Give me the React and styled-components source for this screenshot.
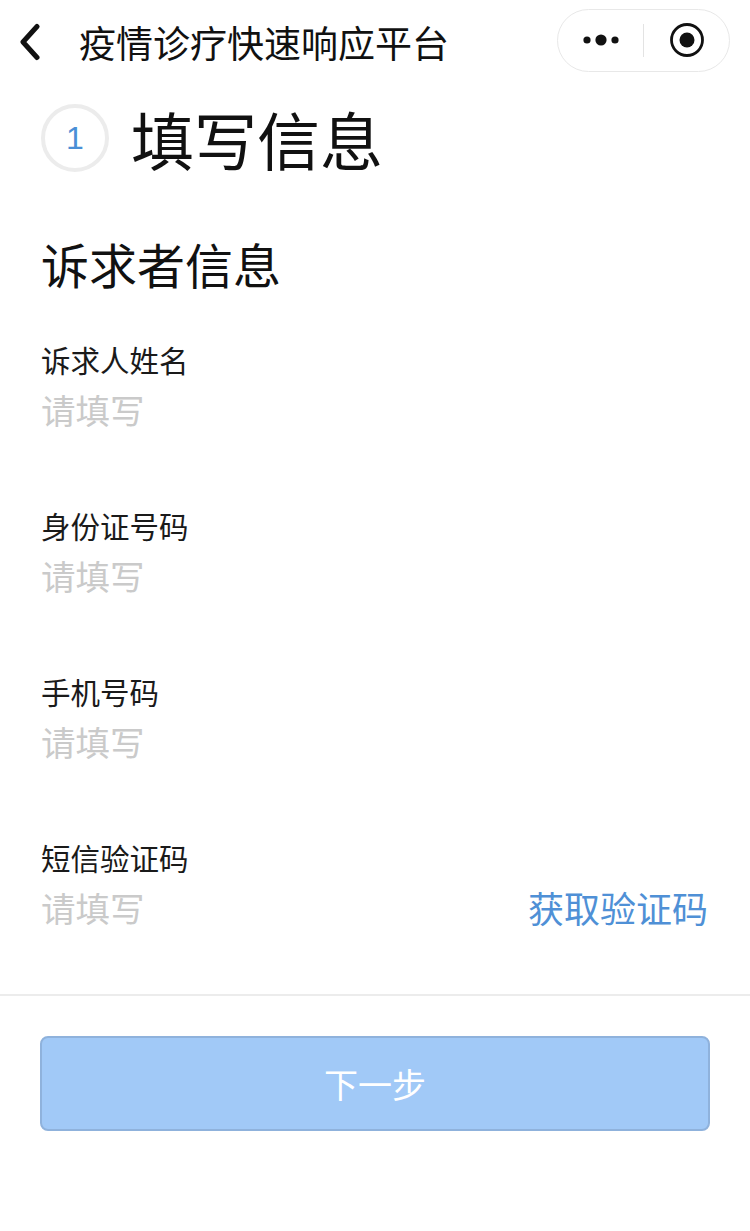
import React from "react";
import styled, { createGlobalStyle } from "styled-components";

const Global = createGlobalStyle`
  html, body { margin: 0; padding: 0; background: #fff; }
  body { font-family: "Noto Sans CJK SC", "Noto Sans", sans-serif; color: #1a1a1a; }
  * { box-sizing: border-box; }
`;

const Page = styled.div`
  width: 750px;
  min-height: 1231px;
  background: #fff;
  display: flex;
  flex-direction: column;
`;

const NavBar = styled.div`
  height: 82px;
  display: flex;
  align-items: center;
  padding: 0 20px 0 18px;
`;

const BackButton = styled.div`
  width: 26px;
  height: 40px;
  display: flex;
  align-items: center;
  margin-top: 2px;
`;

const NavTitle = styled.div`
  flex: 1;
  margin-left: 35px;
  font-size: 37px;
  line-height: 44px;
  color: #111;
  margin-top: 2px;
`;

const Capsule = styled.div`
  width: 173px;
  height: 63px;
  border: 1.5px solid #e8e8e8;
  border-radius: 32px;
  display: flex;
  align-items: center;
  margin-top: -2px;
`;

const CapsuleHalf = styled.div`
  flex: 1;
  height: 100%;
  display: flex;
  align-items: center;
  justify-content: center;
`;

const CapsuleDivider = styled.div`
  width: 1px;
  height: 33px;
  background: #e3e3e3;
`;

const StepRow = styled.div`
  margin-top: 22px;
  padding-left: 41px;
  display: flex;
  align-items: center;
  height: 68px;
`;

const StepCircle = styled.div`
  width: 68px;
  height: 68px;
  border-radius: 50%;
  border: 4px solid #ececec;
  display: flex;
  align-items: center;
  justify-content: center;
  font-family: "Liberation Sans", Arial, sans-serif;
  font-size: 32px;
  color: #4a8fd6;
`;

const StepTitle = styled.div`
  margin-left: 22px;
  font-size: 63px;
  line-height: 68px;
  color: #111;
`;

const SectionTitle = styled.div`
  margin-top: 61px;
  padding-left: 41px;
  font-size: 48px;
  line-height: 60px;
  color: #111;
`;

const FieldList = styled.div`
  margin-top: 46px;
  display: flex;
  flex-direction: column;
  gap: 71px;
  padding: 0 42px 0 41px;
`;

const Field = styled.div`
  display: flex;
  flex-direction: column;
  gap: 5px;
`;

const Label = styled.div`
  font-size: 29.5px;
  line-height: 40px;
  color: #1a1a1a;
`;

const InputRow = styled.div`
  display: flex;
  align-items: center;
  justify-content: space-between;
  height: 50px;
`;

const Placeholder = styled.div`
  font-size: 34.5px;
  line-height: 50px;
  color: #cacaca;
`;

const LinkText = styled.div`
  font-size: 36px;
  line-height: 50px;
  color: #4f90d6;
`;

const Footer = styled.div`
  margin-top: 62px;
  border-top: 2px solid #ececec;
  padding: 40px 40px 0 40px;
`;

const NextButton = styled.div`
  height: 95px;
  border-radius: 8px;
  background: #a1c9f7;
  border: 2px solid #8fb2dc;
  display: flex;
  align-items: center;
  justify-content: center;
  font-size: 34px;
  color: #fff;
`;

const fields = [
  { label: "诉求人姓名" },
  { label: "身份证号码" },
  { label: "手机号码" },
  { label: "短信验证码", action: "获取验证码" },
];

export default function App() {
  return (
    <Page>
      <Global />
      <NavBar>
        <BackButton>
          <svg width="24" height="38" viewBox="0 0 24 38">
            <path d="M19 3.5 L5 19 L19 34.5" fill="none" stroke="#111" strokeWidth="5" strokeLinecap="round" strokeLinejoin="round" />
          </svg>
        </BackButton>
        <NavTitle>疫情诊疗快速响应平台</NavTitle>
        <Capsule>
          <CapsuleHalf>
            <svg width="40" height="16" viewBox="0 0 40 16">
              <circle cx="6" cy="8" r="3.6" fill="#111" />
              <circle cx="20" cy="8" r="5.6" fill="#111" />
              <circle cx="34" cy="8" r="3.6" fill="#111" />
            </svg>
          </CapsuleHalf>
          <CapsuleDivider />
          <CapsuleHalf>
            <svg width="38" height="38" viewBox="0 0 38 38">
              <circle cx="19" cy="19" r="15.5" fill="none" stroke="#111" strokeWidth="2.8" />
              <circle cx="19" cy="19" r="7.5" fill="#111" />
            </svg>
          </CapsuleHalf>
        </Capsule>
      </NavBar>

      <StepRow>
        <StepCircle>1</StepCircle>
        <StepTitle>填写信息</StepTitle>
      </StepRow>

      <SectionTitle>诉求者信息</SectionTitle>

      <FieldList>
        {fields.map((f) => (
          <Field key={f.label}>
            <Label>{f.label}</Label>
            <InputRow>
              <Placeholder>请填写</Placeholder>
              {f.action && <LinkText>{f.action}</LinkText>}
            </InputRow>
          </Field>
        ))}
      </FieldList>

      <Footer>
        <NextButton>下一步</NextButton>
      </Footer>
    </Page>
  );
}
